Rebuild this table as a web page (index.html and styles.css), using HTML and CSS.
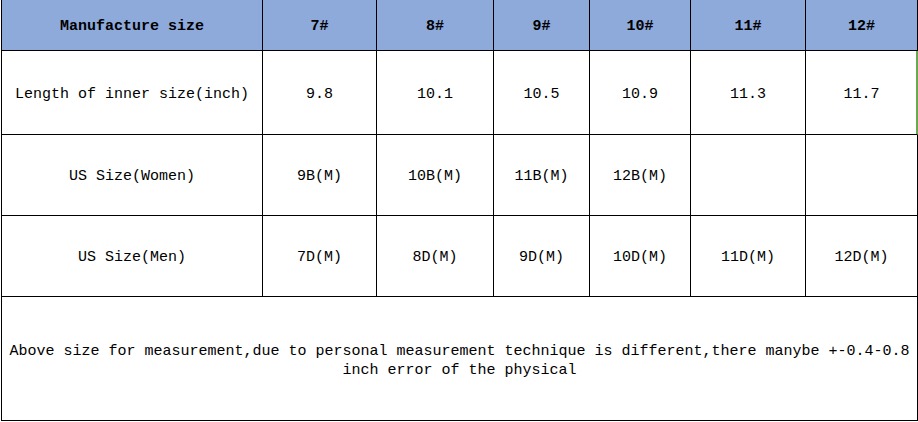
FILE: index.html
```html
<!DOCTYPE html>
<html>
<head>
<meta charset="utf-8">
<link rel="stylesheet" href="styles.css">
</head>
<body>
<div class="wrap">
<table class="size-table">
  <colgroup>
    <col class="c1"><col class="c2"><col class="c3"><col class="c4"><col class="c5"><col class="c6"><col class="c7">
  </colgroup>
  <tr class="head">
    <th>Manufacture size</th><th>7#</th><th>8#</th><th>9#</th><th>10#</th><th>11#</th><th>12#</th>
  </tr>
  <tr class="r-len">
    <td>Length of inner size(inch)</td><td>9.8</td><td>10.1</td><td>10.5</td><td>10.9</td><td>11.3</td><td class="sel">11.7</td>
  </tr>
  <tr class="r-mid">
    <td>US Size(Women)</td><td>9B(M)</td><td>10B(M)</td><td>11B(M)</td><td>12B(M)</td><td></td><td></td>
  </tr>
  <tr class="r-mid">
    <td>US Size(Men)</td><td>7D(M)</td><td>8D(M)</td><td>9D(M)</td><td>10D(M)</td><td>11D(M)</td><td>12D(M)</td>
  </tr>
  <tr class="r-note">
    <td colspan="7">Above size for measurement,due to personal measurement technique is different,there manybe +-0.4-0.8 inch error of the physical</td>
  </tr>
</table>
</div>
</body>
</html>
```

FILE: styles.css
```css
html, body {
  margin: 0;
  padding: 0;
  background: #ffffff;
}
.wrap {
  padding-left: 1px;
}
.size-table {
  border-collapse: separate;
  border-spacing: 0;
  table-layout: fixed;
  width: 917px;
  border-left: 1px solid #000;
  font-family: "Liberation Mono", "DejaVu Sans Mono", monospace;
  font-size: 15px;
  color: #000;
}
.c1 { width: 261px; }
.c2 { width: 114px; }
.c3 { width: 117px; }
.c4 { width: 96px; }
.c5 { width: 101px; }
.c6 { width: 115px; }
.c7 { width: 112px; }
.size-table th,
.size-table td {
  border-right: 1px solid #000;
  border-bottom: 1px solid #000;
  padding: 3px 0 0 0;
  text-align: center;
  vertical-align: middle;
  white-space: nowrap;
  box-sizing: border-box;
}
.size-table th {
  background: #8eaadb;
  font-weight: bold;
}
.head th { height: 51px; }
.r-len td { height: 84px; }
.r-mid td { height: 81px; }
.r-note td {
  height: 124px;
  white-space: normal;
  line-height: 19px;
  padding: 5px 4px 0 4px;
}
.size-table td.sel {
  border-right-color: #6aa84f;
  box-shadow: inset -1px 0 0 #6aa84f;
}
```
